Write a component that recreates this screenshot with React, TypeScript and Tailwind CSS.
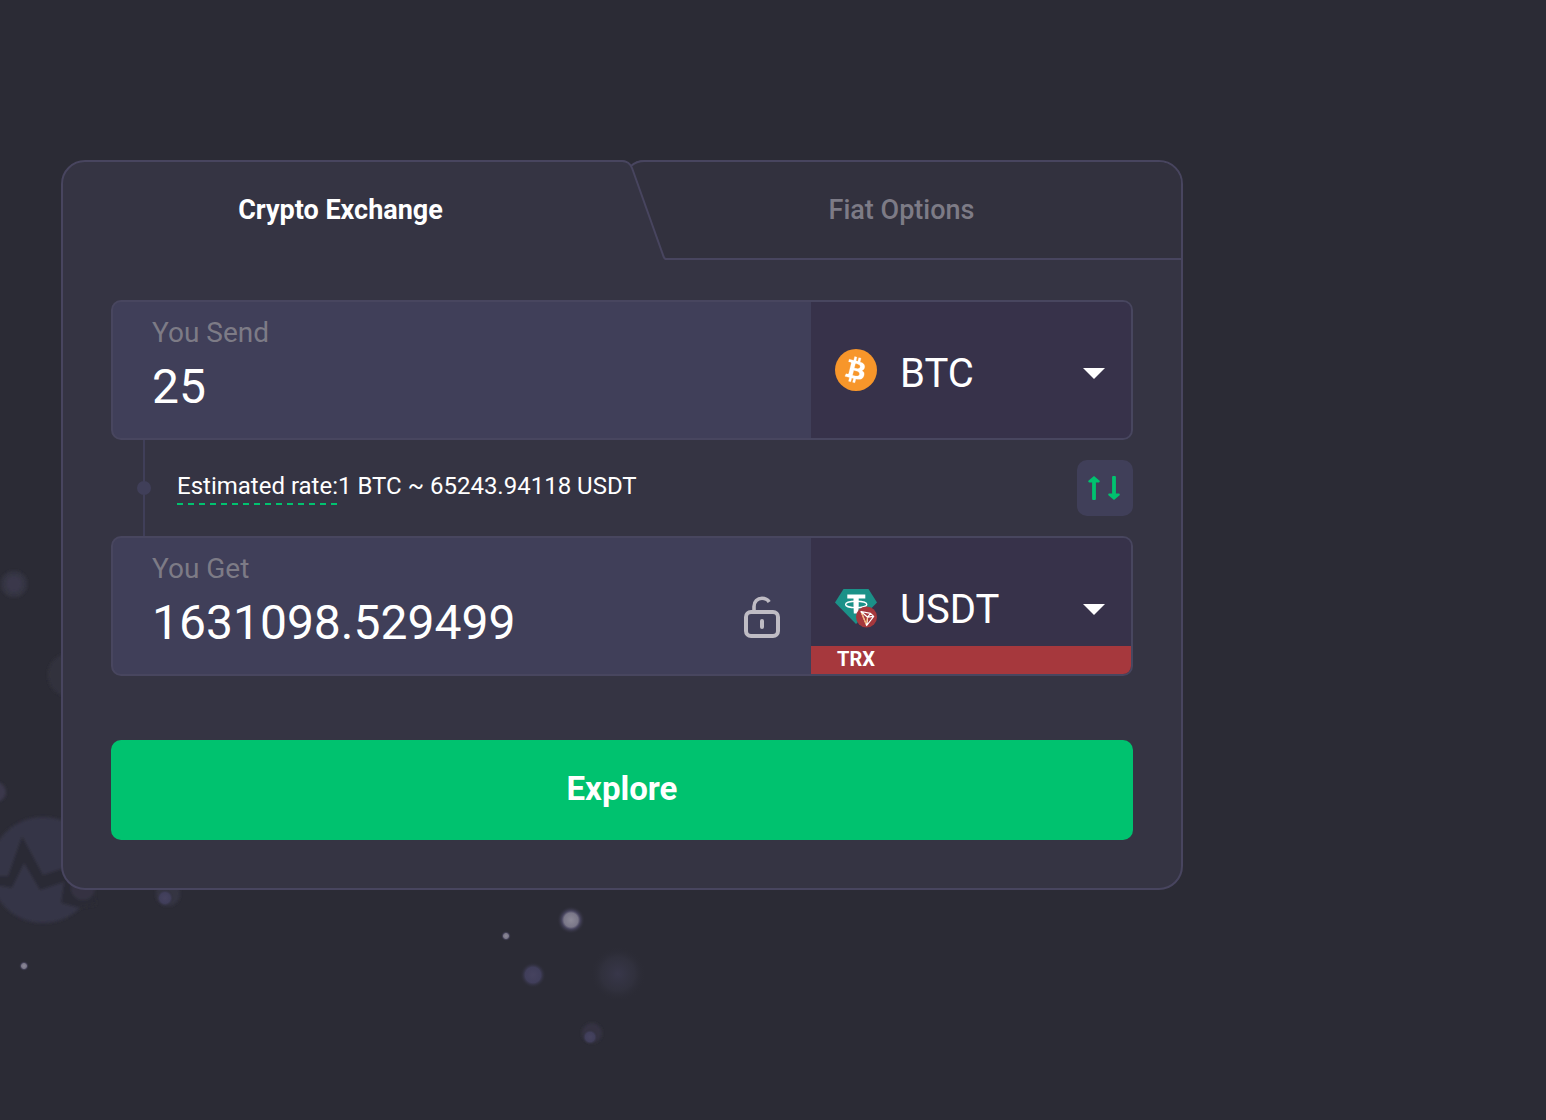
import React, { useState } from "react";

function Backdrop() {
  return (
    <svg
      aria-hidden="true"
      className="pointer-events-none absolute left-0 top-0"
      width="700"
      height="1120"
      viewBox="0 0 700 1120"
    >
      <defs>
        <radialGradient id="haze">
          <stop offset="0" stopColor="#38374a" />
          <stop offset="0.6" stopColor="#32323f" stopOpacity="0.8" />
          <stop offset="1" stopColor="#2b2b35" stopOpacity="0" />
        </radialGradient>
        <radialGradient id="orb">
          <stop offset="0" stopColor="#46435f" />
          <stop offset="0.6" stopColor="#403e5a" />
          <stop offset="1" stopColor="#2b2b35" stopOpacity="0" />
        </radialGradient>
        <radialGradient id="spark">
          <stop offset="0" stopColor="#8d8a98" />
          <stop offset="0.5" stopColor="#7a7788" />
          <stop offset="0.65" stopColor="#48455f" />
          <stop offset="1" stopColor="#2b2b35" stopOpacity="0" />
        </radialGradient>
        <filter id="soft" x="-30%" y="-30%" width="160%" height="160%">
          <feGaussianBlur stdDeviation="1.8" />
        </filter>
      </defs>
      <circle cx="14" cy="584" r="13" fill="#353443" filter="url(#soft)" />
      <circle cx="14" cy="584" r="8" fill="#3a394c" filter="url(#soft)" />
      <circle cx="70" cy="675" r="22" fill="#32313e" filter="url(#soft)" />
      <circle cx="-4" cy="792" r="10" fill="#3a384c" filter="url(#soft)" />
      <g filter="url(#soft)">
        <circle cx="43" cy="870" r="53" fill="#363546" />
        <path
          d="M-10 876 H8 L22 836 L43 875 L64 868 L90 856 L96 905 L80 908 L61 903 L64 882 L40 890 L24 863 L12 888 L-10 884Z"
          fill="#2b2b35"
        />
        <circle cx="83" cy="888" r="12" fill="#343342" />
      </g>
      <circle cx="24" cy="966" r="5" fill="url(#spark)" />
      <circle cx="168" cy="894" r="12" fill="#353443" filter="url(#soft)" />
      <circle cx="165" cy="898" r="9" fill="url(#orb)" />
      <circle cx="571" cy="920" r="14" fill="url(#spark)" />
      <circle cx="506" cy="936" r="5" fill="url(#spark)" />
      <circle cx="533" cy="975" r="13" fill="url(#orb)" />
      <circle cx="618" cy="974" r="28" fill="url(#haze)" />
      <circle cx="592" cy="1033" r="10" fill="#343342" filter="url(#soft)" />
      <circle cx="590" cy="1037" r="8" fill="url(#orb)" />
    </svg>
  );
}

function BitcoinIcon() {
  return (
    <svg aria-hidden="true" width="42" height="42" viewBox="0 0 32 32">
      <circle cx="16" cy="16" r="16" fill="#f7962a" />
      <path
        transform="translate(-0.6 -0.2)"
        fill="#fff"
        stroke="#fff"
        strokeWidth="0.2"
        fillRule="evenodd"
        d="M23.189 14.02c.314-2.096-1.283-3.223-3.465-3.975l.708-2.84-1.728-.43-.69 2.765c-.454-.114-.92-.22-1.385-.326l.695-2.783L15.596 6l-.708 2.839c-.376-.086-.746-.17-1.104-.26l.002-.009-2.384-.595-.46 1.846s1.283.294 1.256.312c.7.175.826.638.805 1.006l-.806 3.235c.048.012.11.03.18.057l-.183-.045-1.13 4.532c-.086.212-.303.531-.793.41.018.025-1.256-.313-1.256-.313l-.858 1.978 2.25.561c.418.105.828.215 1.231.318l-.715 2.872 1.727.43.708-2.84c.472.127.93.245 1.378.357l-.706 2.828 1.728.43.715-2.866c2.948.558 5.164.333 6.097-2.333.752-2.146-.037-3.385-1.588-4.192 1.13-.26 1.98-1.003 2.207-2.538zm-3.95 5.538c-.533 2.147-4.148.986-5.32.695l.95-3.805c1.172.293 4.929.872 4.37 3.11zm.535-5.569c-.487 1.953-3.495.96-4.47.717l.86-3.45c.975.243 4.118.696 3.61 2.733z"
      />
    </svg>
  );
}

function TetherTronIcon() {
  return (
    <svg aria-hidden="true" width="42" height="44" viewBox="0 -5 42 44">
      <path d="M8.5 0h25L42 13.5 21 35 0 13.5z" fill="#1b9188" />
      <ellipse cx="21.2" cy="15.4" rx="10.6" ry="3.2" fill="none" stroke="#fff" strokeWidth="1.4" />
      <path d="M12.3 5.5h18v4h-6.600v6.400l-.3 8.600h-4.600l-.3-8.600V9.500h-6.200z" fill="#fff" />
      <circle cx="31.5" cy="28" r="10.5" fill="#a6383d" />
      <path
        d="M26 22.5l9.500 1.900 3.200 3L31.700 36.500zM26 22.500l6.600 5.700M35.500 24.400l-2.900 3.800M38.700 27.400l-6.100 .8M32.600 28.200l-.9 8.300"
        fill="none"
        stroke="#fff"
        strokeWidth="1.2"
        strokeLinejoin="round"
      />
      <path d="M26.500 24l4.500 11M32.300 28.600l-.9 5" stroke="#f39a3c" strokeWidth="0.8" />
    </svg>
  );
}

function UnlockIcon() {
  return (
    <svg
      aria-hidden="true"
      width="36"
      height="42"
      viewBox="0 0 36 42"
      fill="none"
      stroke="#bfbcc4"
      strokeWidth="4"
    >
      <rect x="2" y="16" width="32" height="24" rx="5" />
      <path d="M10 16v-5.500C10 5.500 13.500 2.300 18 2.300c3.200 0 5.600 1.200 7.200 3.700" strokeWidth="3.600" />
      <path d="M18 25v6" strokeLinecap="round" />
    </svg>
  );
}

function SwapIcon() {
  return (
    <svg aria-hidden="true" width="32" height="24" viewBox="0 0 32 24" fill="#00c26f">
      <path d="M6 0l5.600 4.800q.6 1.400-.8 1.700H7.900V23q0 1-1 1H5.100q-1 0-1-1V6.500H1.200Q-.2 6.200.4 4.800z" />
      <path d="M26 24l5.600-4.800q.6-1.400-.8-1.700H27.900V1q0-1-1-1H25.100q-1 0-1 1V17.500H21.200q-1.400.3-.8 1.700z" />
    </svg>
  );
}

function CurrencyField(props: {
  id: string;
  label: string;
  value: string;
  onChange: (v: string) => void;
  coin: string;
  coins: string[];
  icon: React.ReactNode;
  network?: string;
  lock?: boolean;
}) {
  const { id, label, value, onChange, coin, coins, icon, network, lock } = props;
  return (
    <div className="flex h-[140px] overflow-hidden rounded-[10px] border-2 border-[#48465f] bg-[#403f59]">
      <div className="flex min-w-0 flex-1 items-center pl-[39px] pr-[31px]">
        <div className="flex h-full min-w-0 flex-1 flex-col pt-3">
          <label htmlFor={id} className="h-9 text-[28px] leading-[38px] text-[#7d7b86]">
            {label}
          </label>
          <input
            id={id}
            type="text"
            inputMode="decimal"
            value={value}
            onChange={(e) => onChange(e.target.value)}
            className="h-[72px] w-full bg-transparent text-5xl text-white outline-none"
          />
        </div>
        {lock && (
          <button type="button" aria-label="Lock rate" className="mt-[22px] shrink-0">
            <UnlockIcon />
          </button>
        )}
      </div>
      <div className="relative w-[320px] shrink-0 bg-[#37324a]">
        <div className="pointer-events-none absolute inset-y-0 left-6 flex items-center">{icon}</div>
        <select
          aria-label={label + " currency"}
          defaultValue={coin}
          className="h-full w-full appearance-none bg-transparent pl-[89px] pr-16 pt-2 text-[40px] text-white outline-none"
        >
          {coins.map((c) => (
            <option key={c}>{c}</option>
          ))}
        </select>
        <svg
          aria-hidden="true"
          className="pointer-events-none absolute right-[26px] top-[66px]"
          width="22"
          height="11"
          viewBox="0 0 22 11"
        >
          <path d="M0 0h22L11 11z" fill="#fff" />
        </svg>
        {network && (
          <div className="pointer-events-none absolute inset-x-0 bottom-0 h-7 bg-[#a6383d] pl-[26px] text-xl leading-[26px] font-bold text-white">
            {network}
          </div>
        )}
      </div>
    </div>
  );
}

export default function App() {
  const [send, setSend] = useState("25");
  const [get, setGet] = useState("1631098.529499");

  return (
    <main className="relative min-h-screen overflow-hidden bg-[#2b2b35] px-[61px] py-40 font-['Roboto',sans-serif]">
      <Backdrop />
      <section className="relative w-full max-w-[1122px] rounded-3xl border-2 border-[#48455f] bg-[#353443]">
        <div role="tablist" className="relative -mt-0.5 grid h-[100px] grid-cols-2">
          <button
            type="button"
            role="tab"
            aria-selected="true"
            className="pr-1 text-[27px] font-bold text-white"
          >
            Crypto Exchange
          </button>
          <div className="relative">
            <div className="absolute bottom-0 left-[43px] right-0 top-0.5 rounded-tr-[22px] border-b-2 border-[#48455f] bg-[#32313e]" />
            <svg
              aria-hidden="true"
              className="absolute left-0 top-0"
              width="44"
              height="100"
              viewBox="0 0 44 100"
            >
              <path d="M9 7Q14 2 22 2H44V98H43.500Z" fill="#32313e" />
              <path d="M-1 0H22Q14 0 9 6Q5 0 -1 0Z" fill="#2b2b35" />
              <path
                d="M0 1C5 1 8 3 10 8L41 95Q42 99 44 99M9 6Q14 1 23 1H44"
                fill="none"
                stroke="#48455f"
                strokeWidth="2"
              />
            </svg>
            <button
              type="button"
              role="tab"
              aria-selected="false"
              className="relative h-full w-full text-[27px] font-medium text-[#7d7b86]"
            >
              Fiat Options
            </button>
          </div>
        </div>

        <form className="px-12 pb-12 pt-10" onSubmit={(e) => e.preventDefault()}>
          <CurrencyField
            id="send"
            label="You Send"
            value={send}
            onChange={setSend}
            coin="BTC"
            coins={["BTC", "ETH", "USDT"]}
            icon={<BitcoinIcon />}
          />

          <div className="relative flex h-24 items-center justify-between pl-[66px]">
            <div className="absolute inset-y-0 left-8 w-0.5 bg-[#403f59]" />
            <div className="absolute left-[26px] top-[41px] size-3.5 rounded-full bg-[#403f59]" />
            <p className="flex whitespace-nowrap pb-1 text-2xl leading-[38px] text-white">
              <span className="bg-[repeating-linear-gradient(90deg,#00c26f_0_6px,transparent_6px_11px)] bg-[length:100%_2px] bg-bottom bg-no-repeat">
                Estimated rate:
              </span>
              <span>1 BTC ~ 65243.94118 USDT</span>
            </p>
            <button
              type="button"
              aria-label="Swap currencies"
              className="flex size-14 items-center justify-center rounded-[10px] bg-[#403f59] pr-0.5"
            >
              <SwapIcon />
            </button>
          </div>

          <CurrencyField
            id="get"
            label="You Get"
            value={get}
            onChange={setGet}
            coin="USDT"
            coins={["USDT", "BTC", "ETH"]}
            icon={<TetherTronIcon />}
            network="TRX"
            lock
          />

          <button
            type="submit"
            className="mt-16 h-[100px] w-full rounded-[10px] bg-[#00c26f] pb-0.5 text-[33px] font-bold text-white"
          >
            Explore
          </button>
        </form>
      </section>
    </main>
  );
}
